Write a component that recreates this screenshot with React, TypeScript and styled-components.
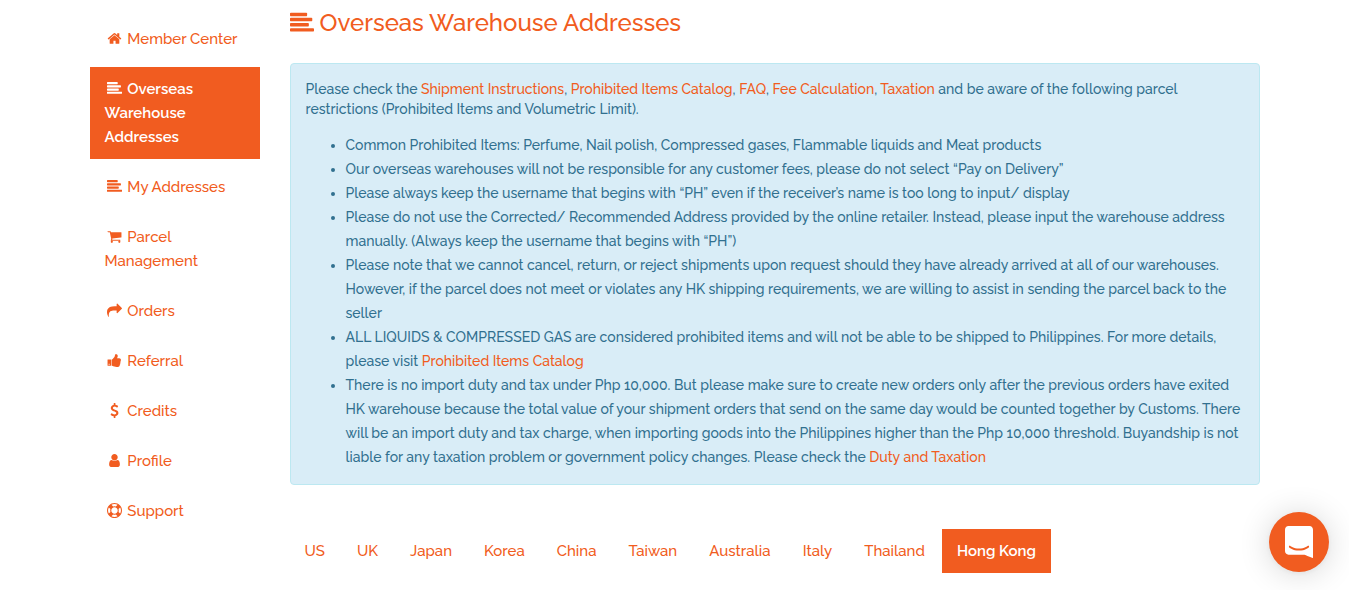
import React from 'react';
import styled, { createGlobalStyle, css } from 'styled-components';

const ORANGE = '#f15c20';

const GlobalStyle = createGlobalStyle`
  *, *::before, *::after { box-sizing: border-box; }
  body {
    margin: 0;
    background: #fff;
    color: #333;
    font-family: Raleway, "Open Sans", "Liberation Sans", sans-serif;
    font-size: 15px;
    font-weight: 500;
    line-height: 24px;
  }
  a { color: ${ORANGE}; text-decoration: none; }
`;

const icons = {
  home: 'M1472 992v480q0 26-19 45t-45 19h-384v-384h-256v384h-384q-26 0-45-19t-19-45v-480q0-1 .5-3t.5-3l575-474 575 474q1 2 1 6zm223-69l-62 74q-8 9-21 11h-3q-13 0-21-7l-692-577-692 577q-12 8-24 7-13-2-21-11l-62-74q-8-10-7-23.5t11-21.5l719-599q32-26 76-26t76 26l244 204v-195q0-14 9-23t23-9h192q14 0 23 9t9 23v408l219 182q10 8 11 21.5t-7 23.5z',
  alignLeft:
    'M1792 1344v128q0 26-19 45t-45 19h-1664q-26 0-45-19t-19-45v-128q0-26 19-45t45-19h1664q26 0 45 19t19 45zm-384-384v128q0 26-19 45t-45 19h-1280q-26 0-45-19t-19-45v-128q0-26 19-45t45-19h1280q26 0 45 19t19 45zm256-384v128q0 26-19 45t-45 19h-1536q-26 0-45-19t-19-45v-128q0-26 19-45t45-19h1536q26 0 45 19t19 45zm-384-384v128q0 26-19 45t-45 19h-1152q-26 0-45-19t-19-45v-128q0-26 19-45t45-19h1152q26 0 45 19t19 45z',
  cart: 'M704 1536q0 52-38 90t-90 38-90-38-38-90 38-90 90-38 90 38 38 90zm896 0q0 52-38 90t-90 38-90-38-38-90 38-90 90-38 90 38 38 90zm128-1088v512q0 24-16.5 42.5t-40.5 21.5l-1044 122q13 60 13 70 0 16-24 64h920q26 0 45 19t19 45-19 45-45 19h-1024q-26 0-45-19t-19-45q0-11 8-31.5t16-36 21.5-40 15.5-29.5l-177-823h-204q-26 0-45-19t-19-45 19-45 45-19h256q16 0 28.5 6.5t19.5 15.5 13 24.5 8 26 5.5 29.5 4.5 26h1201q26 0 45 19t19 45z',
  share:
    'M1792 640q0 26-19 45l-512 512q-19 19-45 19t-45-19-19-45v-256h-224q-98 0-175.5 6t-154 21.5-133 42.5-105.5 69.5-80 101-48.5 138.5-17.5 181q0 55 5 123 0 6 2.5 23.5t2.5 26.5q0 15-8.5 25t-23.5 10q-16 0-28-17-7-9-13-22t-13.5-30-10.5-24q-127-285-127-451 0-199 53-333 162-403 875-403h224v-256q0-26 19-45t45-19 45 19l512 512q19 19 19 45z',
  thumbsUp:
    'M320 1344q0-26-19-45t-45-19q-27 0-45.5 19t-18.5 45q0 27 18.5 45.5t45.5 18.5q26 0 45-18.5t19-45.5zm160-512v640q0 26-19 45t-45 19h-288q-26 0-45-19t-19-45v-640q0-26 19-45t45-19h288q26 0 45 19t19 45zm1184 0q0 86-55 149 15 44 15 76 3 76-43 137 17 56 0 117-15 57-54 94 9 112-49 181-64 76-197 78h-129q-66 0-144-15.5t-121.5-29-120.5-39.5q-123-43-158-44-26-1-45-19.5t-19-44.5v-641q0-25 18-43.5t43-20.5q24-2 76-59t101-121q68-87 101-120 18-18 31-48t17.5-48.5 13.5-60.5q7-39 12.5-61t19.5-52 34-50q19-19 45-19 46 0 82.5 10.5t60 26 40 40.5 24 45 12 50 5 45 .5 39q0 38-9.5 76t-19 60-27.5 56q-3 6-10 18t-11 22-8 24h277q78 0 135 57t57 135z',
  dollar:
    'M1362 1185q0 153-99.5 263.5t-258.5 136.5v175q0 14-9 23t-23 9h-135q-13 0-22.5-9.5t-9.5-22.5v-175q-66-9-127.5-31t-101.5-44.5-74-48-46.5-37.5-17.5-18q-17-21-2-41l103-135q7-10 23-12 15-2 24 9l2 2q113 99 243 125 37 8 74 8 81 0 142.5-43t61.5-122q0-28-15-53t-33.5-42-58.5-37.5-66-32-80-32.5q-39-16-61.5-25t-61.5-26.5-62.5-31-56.5-35.5-53.5-42.5-43.5-49-35.5-58-21-66.5-8.5-78q0-138 98-242t255-134v-180q0-13 9.5-22.5t22.5-9.5h135q14 0 23 9t9 23v176q57 6 110.5 23t87 33.5 63.5 37.5 39 29 15 14q17 18 5 38l-81 146q-8 15-23 16-14 3-27-7-3-3-14.5-12t-39-26.5-58.5-32-74.5-26-85.5-11.5q-95 0-155 43t-60 111q0 26 8.5 48t29.5 41.5 39.5 33 56 31 60.5 27 70 27.5q53 20 81 31.5t76 35 75.5 42.5 62 50 53 63.5 31.5 76.5 13 94z',
  user: 'M1536 1399q0 109-62.5 187t-150.5 78h-854q-88 0-150.5-78t-62.5-187q0-85 8.5-160.5t31.5-152 58.5-131 94-89 134.5-34.5q131 128 313 128t313-128q76 0 134.5 34.5t94 89 58.5 131 31.5 152 8.5 160.5zm-256-887q0 159-112.5 271.5t-271.5 112.5-271.5-112.5-112.5-271.5 112.5-271.5 271.5-112.5 271.5 112.5 112.5 271.5z',
  lifeRing:
    'M896 0q182 0 348 71t286 191 191 286 71 348-71 348-191 286-286 191-348 71-348-71-286-191-191-286-71-348 71-348 191-286 286-191 348-71zm0 128q-190 0-361 90l194 194q82-28 167-28t167 28l194-194q-171-90-361-90zm-678 1129l194-194q-28-82-28-167t28-167l-194-194q-90 171-90 361t90 361zm678 407q190 0 361-90l-194-194q-82 28-167 28t-167-28l-194 194q171 90 361 90zm0-384q159 0 271.5-112.5t112.5-271.5-112.5-271.5-271.5-112.5-271.5 112.5-112.5 271.5 112.5 271.5 271.5 112.5zm484-217l194 194q90-171 90-361t-90-361l-194 194q28 82 28 167t-28 167z',
};

type IconName = keyof typeof icons;

const Glyph = styled.svg<{ $large?: boolean }>`
  width: ${p => (p.$large ? 24 : 15)}px;
  height: ${p => (p.$large ? 24 : 15)}px;
  margin: 0 ${p => (p.$large ? 0 : 2)}px;
  fill: currentColor;
  vertical-align: ${p => (p.$large ? -4 : -2)}px;
`;

function Icon({ name, large }: { name: IconName; large?: boolean }) {
  return (
    <Glyph viewBox="0 0 1792 1792" $large={large} aria-hidden="true">
      <path d={icons[name]} />
    </Glyph>
  );
}

const Page = styled.div`
  display: flex;
  align-items: flex-start;
  gap: 30px;
  max-width: 1170px;
  margin: 0 auto;
`;

const Sidebar = styled.nav`
  flex: 0 0 170px;
  padding-top: 17px;
`;

const SideList = styled.ul`
  display: flex;
  flex-direction: column;
  gap: 6px;
  margin: 0;
  padding: 0;
  list-style: none;
`;

const pill = css<{ $active?: boolean }>`
  display: block;
  padding: 10px 15px;
  ${p =>
    p.$active &&
    css`
      background: ${ORANGE};
      color: #fff;
      font-weight: 600;
    `}
`;

const SideLink = styled.a<{ $active?: boolean }>`
  ${pill}
`;

const Main = styled.main`
  flex: 1;
  min-width: 0;
`;

const Title = styled.h1`
  margin: 0 0 25px;
  padding-top: 8px;
  color: ${ORANGE};
  font-size: 24px;
  font-weight: 500;
  line-height: 30px;
`;

const Notice = styled.section`
  padding: 15px;
  border: 1px solid #bce8f1;
  border-radius: 4px;
  background: #d9edf7;
  color: #31708f;
  font-size: 14px;
`;

const Intro = styled.p`
  margin: 0 0 14px;
  line-height: 20px;
`;

const Rules = styled.ul`
  margin: 0;
  padding-left: 40px;
`;

const Tabs = styled.ul`
  display: flex;
  flex-wrap: wrap;
  gap: 2px;
  margin: 44px 0 16px;
  padding: 0;
  list-style: none;
`;

const TabLink = styled.a<{ $active?: boolean }>`
  ${pill}
`;

const ChatButton = styled.button`
  position: fixed;
  right: 20px;
  bottom: 18px;
  display: flex;
  align-items: center;
  justify-content: center;
  width: 60px;
  height: 60px;
  padding: 0;
  border: 0;
  border-radius: 50%;
  background: ${ORANGE};
  box-shadow: 0 1px 6px rgba(0, 0, 0, 0.06), 0 2px 32px rgba(0, 0, 0, 0.16);
  cursor: pointer;
`;

const menu: { icon: IconName; label: string; active?: boolean }[] = [
  { icon: 'home', label: 'Member Center' },
  { icon: 'alignLeft', label: 'Overseas Warehouse Addresses', active: true },
  { icon: 'alignLeft', label: 'My Addresses' },
  { icon: 'cart', label: 'Parcel Management' },
  { icon: 'share', label: 'Orders' },
  { icon: 'thumbsUp', label: 'Referral' },
  { icon: 'dollar', label: 'Credits' },
  { icon: 'user', label: 'Profile' },
  { icon: 'lifeRing', label: 'Support' },
];

const regions = ['US', 'UK', 'Japan', 'Korea', 'China', 'Taiwan', 'Australia', 'Italy', 'Thailand', 'Hong Kong'];

export default function App() {
  return (
    <>
      <GlobalStyle />
      <Page>
        <Sidebar aria-label="Account">
          <SideList>
            {menu.map(item => (
              <li key={item.label}>
                <SideLink href="#" $active={item.active}>
                  <Icon name={item.icon} /> {item.label}
                </SideLink>
              </li>
            ))}
          </SideList>
        </Sidebar>
        <Main>
          <Title>
            <Icon name="alignLeft" large /> Overseas Warehouse Addresses
          </Title>
          <Notice>
            <Intro>
              Please check the <a href="#">Shipment Instructions</a>, <a href="#">Prohibited Items Catalog</a>,{' '}
              <a href="#">FAQ</a>, <a href="#">Fee Calculation</a>, <a href="#">Taxation</a> and be aware of the
              following parcel restrictions (Prohibited Items and Volumetric Limit).
            </Intro>
            <Rules>
              <li>Common Prohibited Items: Perfume, Nail polish, Compressed gases, Flammable liquids and Meat products</li>
              <li>
                Our overseas warehouses will not be responsible for any customer fees, please do not select “Pay on
                Delivery”
              </li>
              <li>
                Please always keep the username that begins with “PH” even if the receiver’s name is too long to input/
                display
              </li>
              <li>
                Please do not use the Corrected/ Recommended Address provided by the online retailer. Instead, please
                input the warehouse address manually. (Always keep the username that begins with “PH”)
              </li>
              <li>
                Please note that we cannot cancel, return, or reject shipments upon request should they have already
                arrived at all of our warehouses. However, if the parcel does not meet or violates any HK shipping
                requirements, we are willing to assist in sending the parcel back to the seller
              </li>
              <li>
                ALL LIQUIDS &amp; COMPRESSED GAS are considered prohibited items and will not be able to be shipped to
                Philippines. For more details, please visit <a href="#">Prohibited Items Catalog</a>
              </li>
              <li>
                There is no import duty and tax under Php 10,000. But please make sure to create new orders only after
                the previous orders have exited HK warehouse because the total value of your shipment orders that send
                on the same day would be counted together by Customs. There will be an import duty and tax charge, when
                importing goods into the Philippines higher than the Php 10,000 threshold. Buyandship is not liable for
                any taxation problem or government policy changes. Please check the <a href="#">Duty and Taxation</a>
              </li>
            </Rules>
          </Notice>
          <Tabs>
            {regions.map(name => (
              <li key={name}>
                <TabLink href="#" $active={name === 'Hong Kong'}>
                  {name}
                </TabLink>
              </li>
            ))}
          </Tabs>
        </Main>
      </Page>
      <ChatButton type="button" aria-label="Open chat">
        <svg width="28" height="32" viewBox="0 0 28 32" fill="#fff" aria-hidden="true">
          <path d="M28 32s-4.714-1.855-8.527-3.34H3.437C1.54 28.66 0 27.026 0 25.013V3.644C0 1.633 1.54 0 3.437 0h21.125c1.898 0 3.437 1.632 3.437 3.645v18.404H28V32zm-4.139-11.982a.88.88 0 00-1.292-.105c-.03.026-3.015 2.681-8.57 2.681-5.486 0-8.517-2.636-8.571-2.684a.88.88 0 00-1.29.107 1.01 1.01 0 00-.219.708.992.992 0 00.318.664c.142.128 3.537 3.15 9.762 3.15 6.226 0 9.621-3.022 9.763-3.15a.992.992 0 00.317-.664 1.01 1.01 0 00-.218-.707z" />
        </svg>
      </ChatButton>
    </>
  );
}
